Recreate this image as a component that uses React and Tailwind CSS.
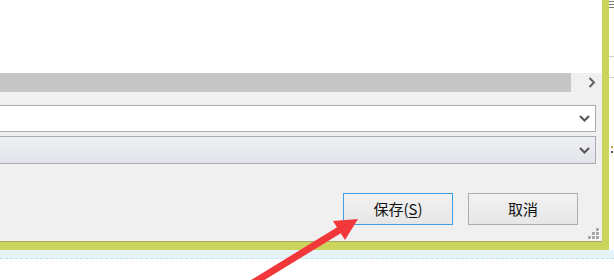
import React from "react";

function Chevron() {
  return (
    <svg width="11" height="7" viewBox="0 0 11 7" className="block">
      <path d="M1 1l4.5 4.5L10 1" fill="none" stroke="#555" strokeWidth="2" />
    </svg>
  );
}

function Grip() {
  const dots = [
    [8, 0],
    [4, 4],
    [8, 4],
    [0, 8],
    [4, 8],
    [8, 8],
  ];
  return (
    <svg width="12" height="12" viewBox="0 0 12 12" className="block">
      {dots.map(([x, y]) => (
        <g key={x + "-" + y}>
          <rect x={x + 1} y={y + 1} width="3" height="3" fill="#fff" />
          <rect x={x} y={y} width="3" height="3" fill="#a8a8a8" />
        </g>
      ))}
    </svg>
  );
}

export default function App() {
  return (
    <div
      className="relative w-[614px] h-[280px] overflow-hidden bg-white"
      style={{ fontFamily: '"Noto Sans CJK SC", "Liberation Sans", sans-serif' }}
    >
      <div className="flex h-[250px]">
        {/* dialog window with green frame */}
        <div className="w-[609px] h-[250px] border-r-[7px] border-b-[8px] border-[#cbd45b] flex flex-col bg-[#f0f0f0]">
          <div className="h-[73px] bg-white" />
          {/* horizontal scrollbar */}
          <div className="h-[19px] flex">
            <div className="w-[571px] bg-[#c6c6c6]" />
            <div className="flex-1 flex items-center justify-end pr-[6px]">
              <svg width="8" height="11" viewBox="0 0 8 11" className="block">
                <path d="M1.5 1l4.5 4.5L1.5 10" fill="none" stroke="#606060" strokeWidth="2" />
              </svg>
            </div>
          </div>
          {/* combo boxes */}
          <div className="mt-[13px] mr-[6px] h-[27px] bg-white border border-l-0 border-[#abadb3] flex items-center justify-end pr-[5px]">
            <Chevron />
          </div>
          <div className="mt-[4px] mr-[6px] h-[28px] bg-gradient-to-b from-[#eef0f3] to-[#e1e4ea] border border-l-0 border-[#a9acb3] flex items-center justify-end pr-[5px]">
            <Chevron />
          </div>
          {/* buttons */}
          <div className="mt-[29px] flex justify-end gap-[15px] pr-[24px]">
            <button className="w-[110px] h-[32px] border border-[#3e9de3] bg-gradient-to-b from-[#f2f2f2] to-[#e6e6e6] text-[15px] text-[#111] flex items-center justify-center">
              保存(<span className="underline underline-offset-2">S</span>)
            </button>
            <button className="w-[110px] h-[32px] border border-[#adadad] bg-gradient-to-b from-[#f2f2f2] to-[#e6e6e6] text-[15px] text-[#111] flex items-center justify-center">
              取消
            </button>
          </div>
          <div className="flex-1 flex items-end justify-end pr-[2px] pb-[1px] border-b border-[#a9ac60]">
            <Grip />
          </div>
        </div>
        {/* window behind, right edge */}
        <div className="flex-1 bg-white flex flex-col">
          <div className="mt-[1px] h-[1px] bg-[#777]" />
          <div className="mt-[2px] h-[1px] bg-[#777]" />
          <div className="mt-[2px] h-[1px] bg-[#777]" />
          <div className="mt-[48px] h-[1px] bg-[#d0d0d0]" />
          <div className="mt-[20px] h-[1px] bg-[#d0d0d0]" />
          <div className="mt-[68px] ml-[2px] w-[2px] h-[2px] bg-[#c89a3a]" />
          <div className="mt-[3px] ml-[2px] w-[2px] h-[2px] bg-[#555]" />
        </div>
      </div>
      {/* light blue band below */}
      <div className="h-[9px] bg-[#e6f3fb] border-b border-dashed border-[#c4dbea]" />

      {/* red annotation arrow */}
      <svg
        className="absolute left-0 top-0 pointer-events-none"
        width="614"
        height="280"
        viewBox="0 0 614 280"
      >
        <line x1="248" y1="286" x2="341" y2="229" stroke="#f2373a" strokeWidth="7" />
        <polygon points="358,219 333,221 345,240" fill="#f2373a" />
      </svg>
    </div>
  );
}
